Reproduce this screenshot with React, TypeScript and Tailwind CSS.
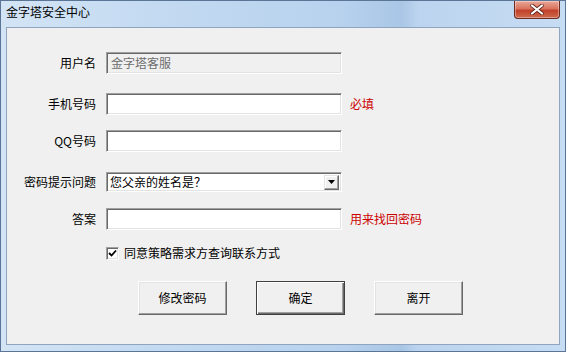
import React from "react";

const font = { fontFamily: '"Noto Sans CJK SC", "Noto Sans", sans-serif' };

function Sunken({ children, className = "" }: { children?: React.ReactNode; className?: string }) {
  return (
    <div
      className={
        "box-border border border-t-[#a0a0a0] border-l-[#a0a0a0] border-b-[#ffffff] border-r-[#ffffff] shadow-[inset_1px_1px_0_#696969,inset_-1px_-1px_0_#e3e3e3] " +
        className
      }
    >
      {children}
    </div>
  );
}

function Btn({ label, def = false }: { label: string; def?: boolean }) {
  return (
    <div
      className={
        "box-border w-[89px] h-[34px] flex items-center justify-center text-[12px] text-black bg-[#f0f0f0] " +
        (def
          ? "border border-[#404040] shadow-[inset_1px_1px_0_#ffffff,inset_-1px_-1px_0_#696969,inset_-2px_-2px_0_#a0a0a0]"
          : "border border-t-[#ffffff] border-l-[#ffffff] border-b-[#696969] border-r-[#696969] shadow-[inset_-1px_-1px_0_#a0a0a0,inset_1px_1px_0_#e3e3e3]")
      }
    >
      {label}
    </div>
  );
}

function Label({ text }: { text: string }) {
  return <div className="w-[89px] pr-0 text-right text-[12px] text-black leading-none">{text}</div>;
}

export default function App() {
  return (
    <div
      style={font}
      className="w-[566px] h-[352px] box-border flex flex-col bg-[linear-gradient(90deg,#d3e4f5_0%,#c2d9f1_30%,#b8d2ee_60%,#a9c6e6_71%,#bcd4ef_74%,#c6dcf3_100%)] border border-[#5a7596] overflow-hidden"
    >
      {/* title bar */}
      <div className="h-[26px] flex items-start justify-between">
        <div className="pl-[5px] pt-[5px] text-[12px] text-black leading-none">金字塔安全中心</div>
        <div className="mr-[5px] w-[46px] h-[18px] rounded-b-[4px] border border-t-0 border-[#6b2a22] bg-[linear-gradient(180deg,#e9a99a_0%,#d9735f_45%,#c1412a_55%,#cf6a4d_100%)] flex items-center justify-center shadow-[inset_0_0_0_1px_rgba(255,255,255,0.35)]">
          <svg width="14" height="11" viewBox="0 0 14 11">
            <path d="M2 1.5 L12 9.5 M12 1.5 L2 9.5" stroke="#5a2318" strokeWidth="3.6" strokeLinecap="round" />
            <path d="M2 1.5 L12 9.5 M12 1.5 L2 9.5" stroke="#ffffff" strokeWidth="2.2" strokeLinecap="round" />
          </svg>
        </div>
      </div>

      {/* client */}
      <div className="mx-[5px] mb-[6px] flex-1 box-border border border-[#8ea4bf] bg-[#f0f0f0] flex flex-col pt-[24px] text-[12px]">
        {/* row 1 */}
        <div className="flex items-center h-[22px]">
          <Label text="用户名" />
          <Sunken className="ml-[10px] w-[236px] h-[22px] bg-[#f0f0f0] flex items-center pl-[4px] text-[#6d6d6d]">
            金字塔客服
          </Sunken>
        </div>
        {/* row 2 */}
        <div className="flex items-center h-[22px] mt-[19px]">
          <Label text="手机号码" />
          <Sunken className="ml-[10px] w-[236px] h-[22px] bg-white" />
          <div className="ml-[8px] text-[#cc0000]">必填</div>
        </div>
        {/* row 3 */}
        <div className="flex items-center h-[22px] mt-[15px]">
          <Label text="QQ号码" />
          <Sunken className="ml-[10px] w-[236px] h-[22px] bg-white" />
        </div>
        {/* row 4 */}
        <div className="flex items-center h-[20px] mt-[20px]">
          <Label text="密码提示问题" />
          <Sunken className="ml-[10px] w-[236px] h-[20px] bg-white flex items-center justify-between pl-[3px] pr-[2px] text-black">
            <span>您父亲的姓名是？</span>
            <div className="w-[15px] h-[15px] box-border bg-[#f0f0f0] border border-t-[#e3e3e3] border-l-[#e3e3e3] border-b-[#696969] border-r-[#696969] shadow-[inset_-1px_-1px_0_#a0a0a0,inset_1px_1px_0_#ffffff] flex items-center justify-center">
              <svg width="7" height="4" viewBox="0 0 7 4">
                <path d="M0 0 H7 L3.5 4 Z" fill="#000" />
              </svg>
            </div>
          </Sunken>
        </div>
        {/* row 5 */}
        <div className="flex items-center h-[22px] mt-[16px]">
          <Label text="答案" />
          <Sunken className="ml-[10px] w-[236px] h-[22px] bg-white" />
          <div className="ml-[8px] text-[#cc0000]">用来找回密码</div>
        </div>
        {/* checkbox */}
        <div className="flex items-center h-[14px] mt-[16px] pl-[99px]">
          <Sunken className="w-[13px] h-[13px] bg-white flex items-center justify-center">
            <svg width="9" height="9" viewBox="0 0 9 9">
              <path d="M1 4 L3.5 6.5 L8 1.5" stroke="#000" strokeWidth="1.8" fill="none" />
            </svg>
          </Sunken>
          <span className="ml-[5px] text-black">同意策略需求方查询联系方式</span>
        </div>
        {/* buttons */}
        <div className="flex items-center mt-[21px] pl-[131px] gap-[29px]">
          <Btn label="修改密码" />
          <Btn label="确定" def />
          <Btn label="离开" />
        </div>
      </div>
    </div>
  );
}
